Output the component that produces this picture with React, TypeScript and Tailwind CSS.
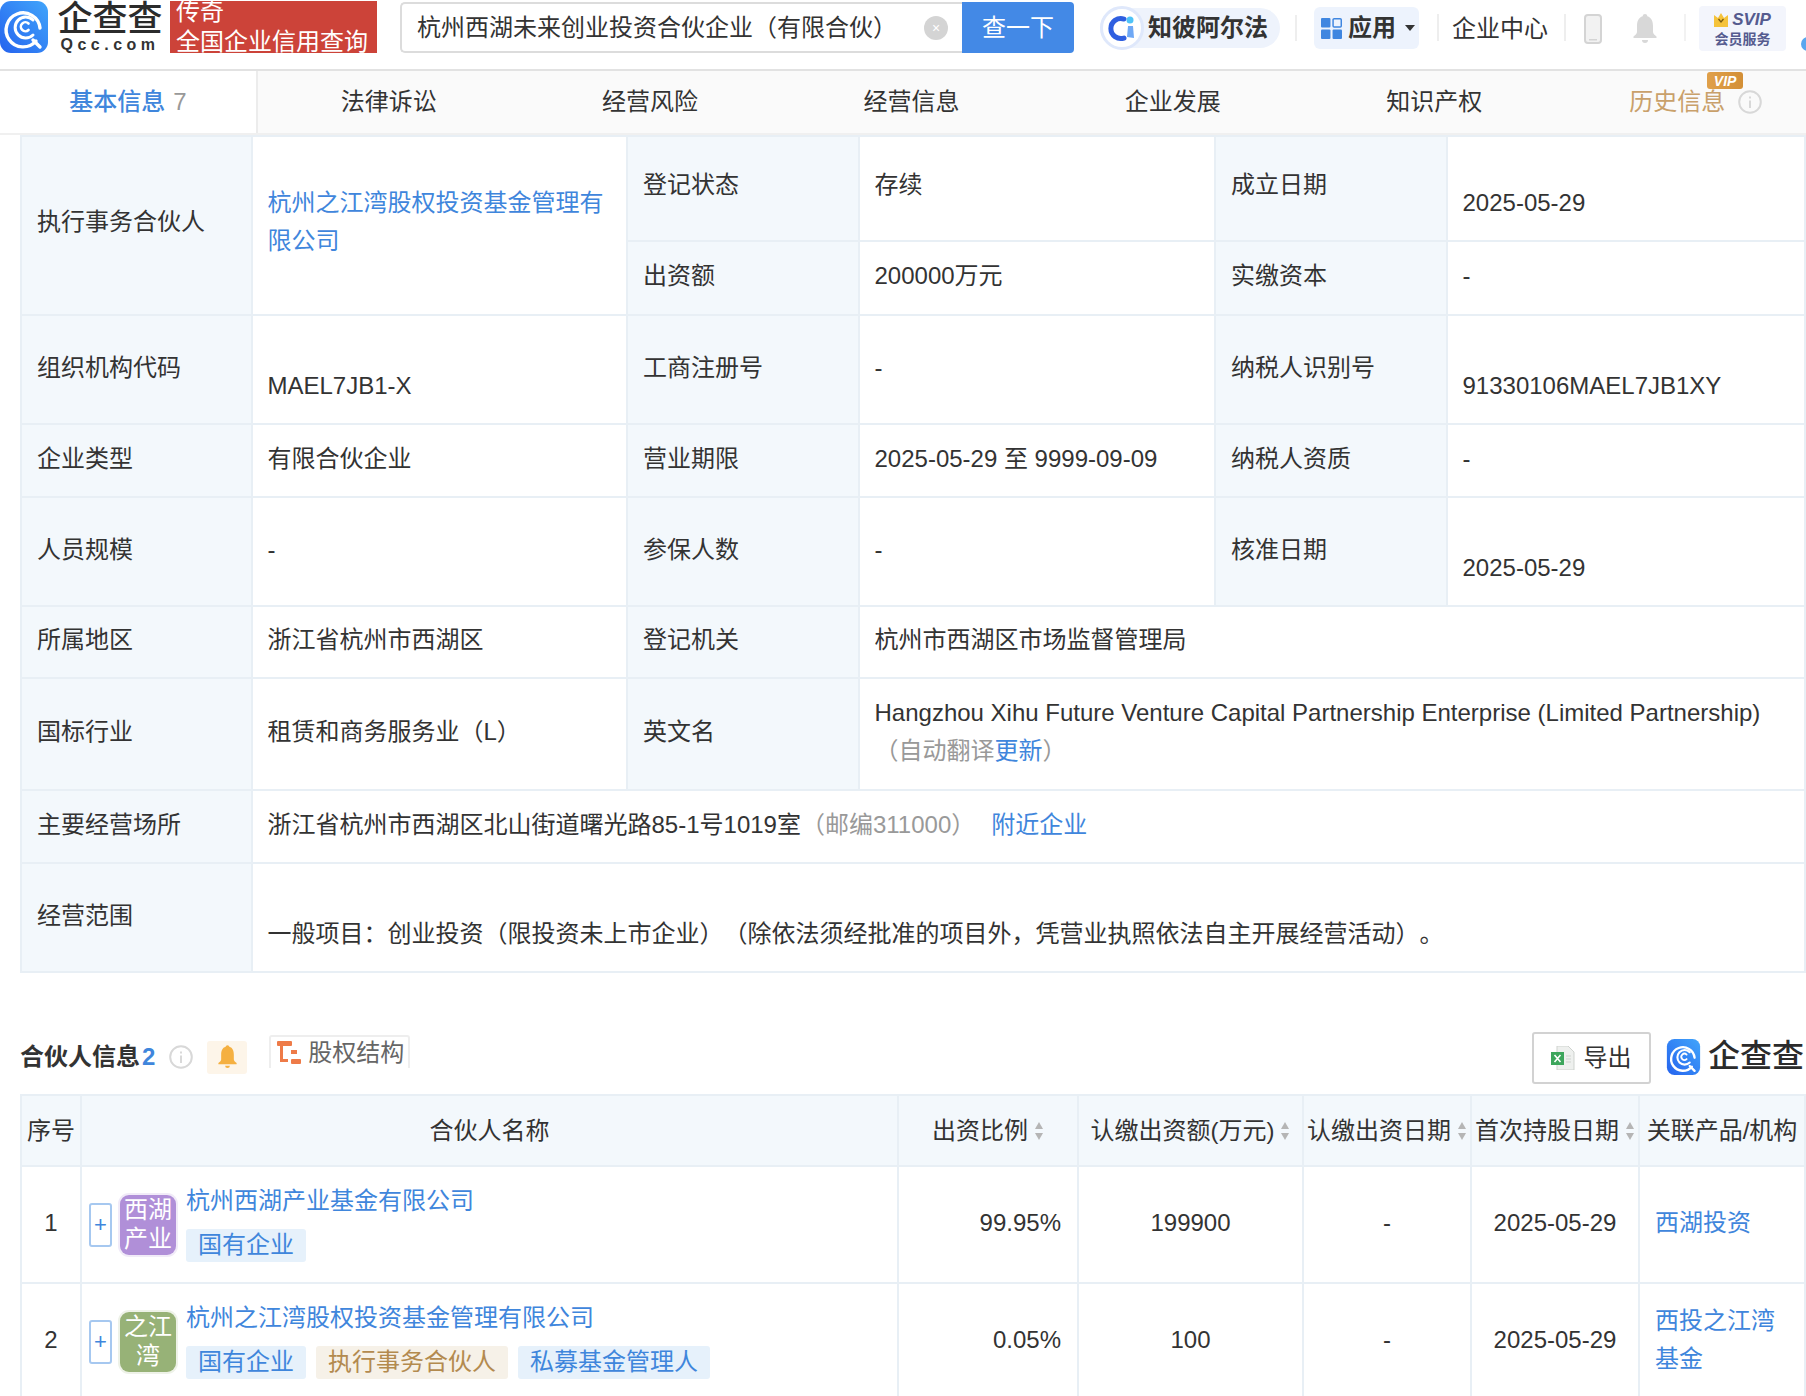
import type { ReactNode } from 'react';

const tabs = ['法律诉讼', '经营风险', '经营信息', '企业发展', '知识产权'];

function LogoMark({ className }: { className: string }) {
  return (
    <svg viewBox="0 0 48 52" className={className}>
      <defs>
        <linearGradient id="qcc" x1="0" y1="1" x2="1" y2="0">
          <stop offset="0" stopColor="#2563ee" />
          <stop offset="1" stopColor="#41a5fb" />
        </linearGradient>
      </defs>
      <rect width="48" height="52" rx="11" fill="url(#qcc)" />
      <g fill="none" stroke="#fff" strokeLinecap="round">
        <path d="M36 40 A17 17 0 1 1 40 27" strokeWidth="3.4" />
        <path d="M33 34 A10.5 10.5 0 1 1 33 19" strokeWidth="3" />
        <path d="M28.5 29 A4.5 4.5 0 1 1 28.5 22.5" strokeWidth="2.6" />
        <path d="M33 39 L40 46" strokeWidth="3.4" />
      </g>
    </svg>
  );
}

function InfoIcon({ className }: { className: string }) {
  return (
    <svg viewBox="0 0 24 24" className={className}>
      <circle cx="12" cy="12" r="10.8" fill="none" stroke="#d8d8d8" strokeWidth="2" />
      <rect x="11.2" y="10.5" width="1.6" height="7.5" fill="#d0d0d0" />
      <rect x="11.2" y="6.5" width="1.6" height="2" fill="#d0d0d0" />
    </svg>
  );
}

function BellIcon({ className, color }: { className: string; color: string }) {
  return (
    <svg viewBox="0 0 24 30" className={className}>
      <path
        d="M12 0c1.4 0 2.2.9 2.3 2.2C18.6 3.400 20 7.500 20 12v6c0 2 2 3 3.500 4.500V24H.5v-1.500C2 21 4 20 4 18v-6c0-4.500 1.400-8.600 5.700-9.800C9.800.9 10.600 0 12 0Z"
        fill={color}
      />
      <path d="M9 26h6a3 3 0 0 1-6 0Z" fill={color} />
    </svg>
  );
}

function SortIcon() {
  return (
    <svg viewBox="0 0 10 22" className="ml-[6px] h-[22px] w-[10px] shrink-0">
      <path d="M5 2 L9 9 H1 Z" fill="#b5b5b5" />
      <path d="M5 20 L9 13 H1 Z" fill="#b5b5b5" />
    </svg>
  );
}

function Th({ children, rowSpan, up }: { children: ReactNode; rowSpan?: number; up?: boolean }) {
  return (
    <td
      rowSpan={rowSpan}
      className={`border-2 border-[#e8eff5] bg-[#f3f8fc] pl-[15px] pr-[14px] align-middle text-left font-normal leading-[38px] text-[#333] ${up ? 'pb-[8px]' : 'pb-[4px]'}`}
    >
      {children}
    </td>
  );
}

function Td({
  children,
  colSpan,
  rowSpan,
  low,
  up,
}: {
  children: ReactNode;
  colSpan?: number;
  rowSpan?: number;
  low?: boolean;
  up?: boolean;
}) {
  const pad = low ? (up ? 'pb-[4px] pt-[32px]' : 'pb-[2px] pt-[34px]') : up ? 'pb-[8px]' : 'pb-[4px]';
  return (
    <td
      colSpan={colSpan}
      rowSpan={rowSpan}
      className={`border-2 border-[#e8eff5] px-[14.5px] align-middle leading-[38px] text-[#333] ${pad}`}
    >
      {children}
    </td>
  );
}

function HeadCell({ children, sort }: { children: ReactNode; sort?: boolean }) {
  return (
    <td className="border-2 border-[#e8eff5] bg-[#f3f8fc] align-middle text-[#333]">
      <div className="flex items-center justify-center whitespace-nowrap">
        {children}
        {sort && <SortIcon />}
      </div>
    </td>
  );
}

function Tag({ children, tone }: { children: ReactNode; tone: 'blue' | 'tan' }) {
  return (
    <span
      className={`flex h-[33px] items-center rounded-[3px] px-3 ${
        tone === 'blue' ? 'bg-[#e6f1fb] text-[#3f86dc]' : 'bg-[#f6f1e8] text-[#b38a4f]'
      }`}
    >
      {children}
    </span>
  );
}

function Partner({
  name,
  logo,
  logoClass,
  tags,
}: {
  name: string;
  logo: string[];
  logoClass: string;
  tags: ReactNode;
}) {
  return (
    <div className="flex items-center pl-[7px]">
      <div className="flex h-[44px] w-[23px] shrink-0 items-center justify-center rounded-[3px] border-2 border-[#a6c8f0] text-[#3f86dc]">
        <span className="text-[22px] leading-none">+</span>
      </div>
      <div className={`ml-[8px] flex h-[60px] w-[56px] shrink-0 flex-col items-center justify-center rounded-[9px] pb-[2px] text-[24px] leading-[29px] text-white ${logoClass}`}>
        {logo.map((l) => (
          <span key={l} className="whitespace-nowrap">{l}</span>
        ))}
      </div>
      <div className="ml-[10px] flex flex-col">
        <a className="mt-[-3px] leading-[34px] text-[#3f86dc]">{name}</a>
        <div className="mt-[11px] flex gap-[10px] [&>span]:pb-[2px]">{tags}</div>
      </div>
    </div>
  );
}

const numCell = 'border-2 border-[#e8eff5] pb-[4px] text-center';

export default function App() {
  return (
    <div className="h-[1396px] w-[1806px] overflow-hidden bg-white text-[24px] text-[#333] [font-family:'Liberation_Sans','Noto_Sans_CJK_SC',sans-serif] [text-spacing-trim:space-all]">
      {/* top bar */}
      <header className="flex h-[71px] items-start overflow-hidden border-b-2 border-[#e2e2e2] pt-px">
        <LogoMark className="h-[52px] w-[48px] shrink-0" />
        <div className="ml-[9px] flex w-[106px] shrink-0 flex-col items-center">
          <span className="whitespace-nowrap text-[35px] font-medium leading-[36px] text-[#2b2b2b]">企查查</span>
          <span className="mt-[1px] whitespace-nowrap text-[16px] font-bold leading-[14px] tracking-[4.500px] text-[#333]">Qcc.com</span>
        </div>
        <div className="ml-[7px] h-[52px] w-[207px] shrink-0 overflow-hidden bg-[#cc4339] px-[6px] text-[24px] text-white">
          <div className="mt-[-4px] leading-[30px]">传奇</div>
          <div className="mt-[4px] whitespace-nowrap leading-[22px]">全国企业信用查询</div>
        </div>
        <div className="ml-[23px] mt-[1px] flex h-[51px] w-[674px] shrink-0">
          <div className="flex flex-1 items-center rounded-l-[5px] border-2 border-r-0 border-[#dcdcdc] pl-[15px]">
            <span className="flex-1 whitespace-nowrap">杭州西湖未来创业投资合伙企业（有限合伙）</span>
            <span className="mr-[14px] flex h-[24px] w-[24px] items-center justify-center rounded-full bg-[#d4d4d4] text-[14px] leading-none text-white">×</span>
          </div>
          <div className="flex w-[112px] items-center justify-center rounded-r-[4px] bg-[#4389e6] text-white">查一下</div>
        </div>
        <div className="ml-[26px] mt-[5px] flex h-[44px] w-[180px] shrink-0 items-center">
          <div className="flex h-[40px] w-full items-center rounded-full bg-[#eef3fc]">
            <span className="flex h-[44px] w-[44px] shrink-0 items-center justify-center rounded-full border-[3px] border-[#dfe8fb] bg-white">
              <svg viewBox="0 0 30 30" className="h-[30px] w-[30px]">
                <path d="M17 6 A10 10 0 1 0 17 25" fill="none" stroke="#2f5fe0" strokeWidth="5" strokeLinecap="round" />
                <circle cx="23" cy="7" r="3.500" fill="#4fc3f7" />
                <path d="M21 13 L26 13 L27 25 L20 24 Z" fill="#6ea8f5" />
              </svg>
            </span>
            <span className="ml-[4px] whitespace-nowrap font-bold text-[#333]">知彼阿尔法</span>
          </div>
        </div>
        <div className="ml-[15px] mt-[14px] h-[26px] w-[2px] shrink-0 bg-[#eeeeee]" />
        <div className="ml-[17px] mt-[6px] flex h-[42px] w-[105px] shrink-0 items-center rounded-[6px] bg-[#edf3fd] pl-[7px]">
          <svg viewBox="0 0 20 20" className="h-[21px] w-[21px] shrink-0">
            <rect x="0" y="0" width="9" height="9" rx="1" fill="#3f86e0" />
            <rect x="11.500" y="0.700" width="7.800" height="7.800" rx="1" fill="none" stroke="#3f86e0" strokeWidth="1.400" />
            <rect x="0" y="11" width="9" height="9" rx="1" fill="#3f86e0" />
            <rect x="11" y="11" width="9" height="9" rx="1" fill="#3f86e0" />
          </svg>
          <span className="ml-[6px] font-bold">应用</span>
          <svg viewBox="0 0 10 6" className="ml-[9px] h-[6px] w-[10px]">
            <path d="M0 0 H10 L5 6 Z" fill="#333" />
          </svg>
        </div>
        <div className="ml-[18px] mt-[13px] h-[27px] w-[2px] shrink-0 bg-[#eeeeee]" />
        <span className="ml-[13px] mt-[9px] shrink-0 whitespace-nowrap leading-[38px]">企业中心</span>
        <div className="ml-[16px] mt-[13px] h-[27px] w-[2px] shrink-0 bg-[#eeeeee]" />
        <svg viewBox="0 0 18 30" className="ml-[18px] mt-[13px] h-[30px] w-[18px] shrink-0">
          <rect x="1" y="1" width="16" height="28" rx="3" fill="#f2f2f2" stroke="#d4d4d4" strokeWidth="2" />
          <rect x="5" y="25" width="8" height="1.500" fill="#d4d4d4" />
        </svg>
        <BellIcon className="ml-[31px] mt-[13px] h-[30px] w-[24px] shrink-0" color="#d8d8d8" />
        <div className="ml-[27px] mt-[13px] h-[27px] w-[2px] shrink-0 bg-[#f2f2f2]" />
        <div className="ml-[13px] mt-[5px] flex h-[45px] w-[87px] shrink-0 flex-col items-center justify-center rounded-[4px] bg-[#f3f5fc]">
          <div className="flex items-center gap-[4px] leading-[22px]">
            <svg viewBox="0 0 14 14" className="h-[14px] w-[14px]">
              <path d="M0 2 L4 5 L7 0 L10 5 L14 2 V14 H0 Z" fill="#f5c33b" />
              <path d="M4.500 6 L7 9 L9.500 6" fill="none" stroke="#7a5a10" strokeWidth="1.300" />
            </svg>
            <span className="text-[17px] font-bold italic leading-[20px] text-[#555b8f]">SVIP</span>
          </div>
          <span className="text-[14px] font-bold leading-[18px] text-[#555b8f]">会员服务</span>
        </div>
        <div className="ml-[15px] mt-[36px] h-[14px] w-[8px] shrink-0 rounded-l-full bg-[#5aa6ee]" />
      </header>

      {/* tabs */}
      <nav className="flex h-[64px] overflow-hidden border-b-2 border-[#f0f0f0] bg-[#fafafa]">
        <div className="flex w-[258px] shrink-0 items-center justify-center gap-[8px] border-r-2 border-[#ececec] bg-white">
          <span className="font-medium text-[#3f86dc]">基本信息</span>
          <span className="text-[#999]">7</span>
        </div>
        {tabs.map((t) => (
          <div key={t} className="flex w-[261.4px] shrink-0 items-center justify-center">
            {t}
          </div>
        ))}
        <div className="relative flex w-[261.4px] shrink-0 items-center justify-center gap-[13px] text-[#c9a06a]">
          <span className="relative">
            历史信息
            <span className="absolute right-[-18px] top-[-12px] flex h-[17px] w-[36px] items-center justify-center rounded-[3px] bg-gradient-to-r from-[#e0a04a] to-[#d38f36] text-[14px] font-bold italic leading-none text-white">
              VIP
            </span>
          </span>
          <InfoIcon className="h-[24px] w-[24px]" />
        </div>
      </nav>

      {/* basic info */}
      <div className="pl-[20px]">
        <table className="w-[1784px] table-fixed border-collapse">
          <colgroup>
            <col className="w-[231px]" />
            <col className="w-[375px]" />
            <col className="w-[232px]" />
            <col className="w-[356px]" />
            <col className="w-[232px]" />
            <col className="w-[358px]" />
          </colgroup>
          <tbody>
            <tr className="h-[105px]">
              <Th rowSpan={2} up>执行事务合伙人</Th>
              <Td rowSpan={2} up>
                <a className="text-[#3f86dc]">杭州之江湾股权投资基金管理有限公司</a>
              </Td>
              <Th up>登记状态</Th>
              <Td up>存续</Td>
              <Th up>成立日期</Th>
              <Td low up>2025-05-29</Td>
            </tr>
            <tr className="h-[74px]">
              <Th>出资额</Th>
              <Td>200000万元</Td>
              <Th>实缴资本</Th>
              <Td>-</Td>
            </tr>
            <tr className="h-[109px]">
              <Th>组织机构代码</Th>
              <Td low>MAEL7JB1-X</Td>
              <Th>工商注册号</Th>
              <Td>-</Td>
              <Th>纳税人识别号</Th>
              <Td low>91330106MAEL7JB1XY</Td>
            </tr>
            <tr className="h-[73px]">
              <Th>企业类型</Th>
              <Td>有限合伙企业</Td>
              <Th>营业期限</Th>
              <Td>2025-05-29 至 9999-09-09</Td>
              <Th>纳税人资质</Th>
              <Td>-</Td>
            </tr>
            <tr className="h-[109px]">
              <Th>人员规模</Th>
              <Td>-</Td>
              <Th>参保人数</Th>
              <Td>-</Td>
              <Th>核准日期</Th>
              <Td low>2025-05-29</Td>
            </tr>
            <tr className="h-[72px]">
              <Th>所属地区</Th>
              <Td>浙江省杭州市西湖区</Td>
              <Th>登记机关</Th>
              <Td colSpan={3}>杭州市西湖区市场监督管理局</Td>
            </tr>
            <tr className="h-[112px]">
              <Th>国标行业</Th>
              <Td>租赁和商务服务业（L）</Td>
              <Th>英文名</Th>
              <Td colSpan={3}>
                Hangzhou Xihu Future Venture Capital Partnership Enterprise (Limited Partnership)
                <br />
                <span className="text-[#999]">
                  （自动翻译<a className="text-[#3f86dc]">更新</a>）
                </span>
              </Td>
            </tr>
            <tr className="h-[73px]">
              <Th>主要经营场所</Th>
              <Td colSpan={5}>
                浙江省杭州市西湖区北山街道曙光路85-1号1019室
                <span className="text-[#999]">（邮编311000）</span>
                <a className="ml-[16px] text-[#3f86dc]">附近企业</a>
              </Td>
            </tr>
            <tr className="h-[109px]">
              <Th>经营范围</Th>
              <Td colSpan={5} low>
                一般项目：创业投资（限投资未上市企业）（除依法须经批准的项目外，凭营业执照依法自主开展经营活动）。
              </Td>
            </tr>
          </tbody>
        </table>

        {/* partners */}
        <div className="relative flex h-[121px] w-[1784px] items-start">
          <div className="mt-[66px] flex items-center">
            <span className="font-bold">合伙人信息</span>
            <span className="ml-[2px] font-bold text-[#3f86dc]">2</span>
            <InfoIcon className="ml-[14px] h-[24px] w-[24px]" />
            <div className="ml-[14px] flex h-[33px] w-[40px] items-center justify-center rounded-[3px] bg-[#fdf5e9]">
              <BellIcon className="h-[24px] w-[19px]" color="#f5b041" />
            </div>
          </div>
          <div className="ml-[22px] mt-[62px] flex h-[33px] w-[141px] items-center rounded-t-[3px] border-2 border-b-0 border-[#eeeeee] pl-[6px] text-[#666]">
            <svg viewBox="0 0 24 24" className="h-[24px] w-[24px] shrink-0">
              <rect x="0" y="0" width="15" height="5" rx="1" fill="#ee7b48" />
              <rect x="3" y="5" width="3" height="15" fill="#ee7b48" />
              <rect x="3" y="18" width="8" height="3" fill="#ee7b48" />
              <rect x="14" y="18" width="10" height="5" rx="1" fill="#ee7b48" />
              <rect x="14" y="9" width="6" height="4" fill="#ee7b48" />
            </svg>
            <span className="ml-[7px] whitespace-nowrap">股权结构</span>
          </div>
          <div className="ml-auto mt-[59px] flex items-start">
            <div className="flex h-[52px] w-[119px] items-center justify-center gap-[8px] rounded-[3px] border-2 border-[#d2d2d2]">
              <svg viewBox="0 0 24 24" className="h-[24px] w-[24px]">
                <path d="M6 0 H17 L23 6 V24 H6 Z" fill="#eef0ee" stroke="#cfd3cf" />
                <rect x="0" y="6" width="13" height="13" fill="#3da65c" />
                <path d="M3.500 9 L9.500 16 M9.500 9 L3.500 16" stroke="#fff" strokeWidth="1.600" />
                <path d="M15 10 H20 M15 13 H20 M15 16 H20" stroke="#cfd3cf" />
              </svg>
              <span>导出</span>
            </div>
            <LogoMark className="ml-[15px] mt-[7px] h-[36px] w-[35px]" />
            <span className="ml-[7px] mt-[4px] whitespace-nowrap text-[32px] font-medium leading-[40px] text-[#2b2b2b]">企查查</span>
          </div>
        </div>

        <table className="w-[1784px] table-fixed border-collapse">
          <colgroup>
            <col className="w-[60px]" />
            <col className="w-[817px]" />
            <col className="w-[180px]" />
            <col className="w-[225px]" />
            <col className="w-[168px]" />
            <col className="w-[168px]" />
            <col className="w-[166px]" />
          </colgroup>
          <tbody>
            <tr className="h-[71px]">
              <HeadCell>序号</HeadCell>
              <HeadCell>合伙人名称</HeadCell>
              <HeadCell sort>出资比例</HeadCell>
              <HeadCell sort>认缴出资额(万元)</HeadCell>
              <HeadCell sort>认缴出资日期</HeadCell>
              <HeadCell sort>首次持股日期</HeadCell>
              <HeadCell>关联产品/机构</HeadCell>
            </tr>
            <tr className="h-[117px]">
              <td className={numCell}>1</td>
              <td className="border-2 border-[#e8eff5]">
                <Partner
                  name="杭州西湖产业基金有限公司"
                  logo={['西湖', '产业']}
                  logoClass="bg-[#b08fd8] ring-2 ring-[#f1ebf8]"
                  tags={<Tag tone="blue">国有企业</Tag>}
                />
              </td>
              <td className="border-2 border-[#e8eff5] pb-[4px] pr-4 text-right">99.95%</td>
              <td className={numCell}>199900</td>
              <td className={numCell}>-</td>
              <td className={numCell}>2025-05-29</td>
              <td className="border-2 border-[#e8eff5] px-[15px] pb-[4px] leading-[38px] text-[#3f86dc]">西湖投资</td>
            </tr>
            <tr className="h-[117px]">
              <td className={numCell}>2</td>
              <td className="border-2 border-[#e8eff5]">
                <Partner
                  name="杭州之江湾股权投资基金管理有限公司"
                  logo={['之江', '湾']}
                  logoClass="bg-[#97b277] ring-2 ring-[#eef2e8]"
                  tags={
                    <>
                      <Tag tone="blue">国有企业</Tag>
                      <Tag tone="tan">执行事务合伙人</Tag>
                      <Tag tone="blue">私募基金管理人</Tag>
                    </>
                  }
                />
              </td>
              <td className="border-2 border-[#e8eff5] pb-[4px] pr-4 text-right">0.05%</td>
              <td className={numCell}>100</td>
              <td className={numCell}>-</td>
              <td className={numCell}>2025-05-29</td>
              <td className="border-2 border-[#e8eff5] px-[15px] pb-[4px] leading-[38px] text-[#3f86dc]">西投之江湾基金</td>
            </tr>
          </tbody>
        </table>
      </div>
    </div>
  );
}
